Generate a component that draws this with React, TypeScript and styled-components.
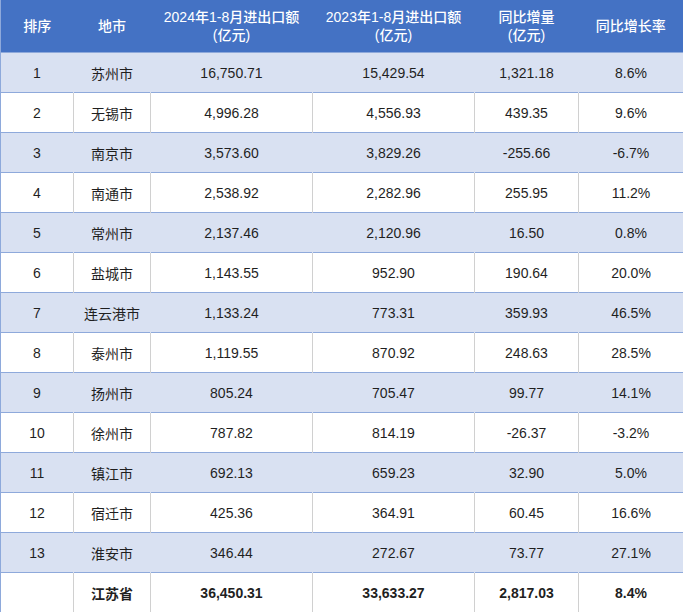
import React from "react";
import styled, { createGlobalStyle } from "styled-components";

const Global = createGlobalStyle`
  html, body { margin: 0; padding: 0; background: #fff; }
  body { font-family: "Liberation Sans", "Noto Sans CJK SC", sans-serif; }
`;

const Table = styled.table`
  width: 683px;
  border-collapse: collapse;
  table-layout: fixed;
  font-size: 14px;
  color: #1f1f1f;
  border-left: 1px solid #8ea9db;
  border-right: 1px solid #8ea9db;
  border-bottom: 1px solid #8ea9db;
`;

const Th = styled.th`
  background: #4472c4;
  color: #fff;
  font-weight: 500;
  height: 52px;
  padding: 0;
  line-height: 18px;
  text-align: center;
  font-size: 14px;
`;

const Td = styled.td<{ $band: boolean; $bold?: boolean }>`
  height: 39px;
  padding: 0;
  text-align: center;
  background: ${(p) => (p.$band ? "#d9e1f2" : "#fff")};
  border-top: 1px solid #8ea9db;
  border-left: 1px solid ${(p) => (p.$band ? "#d9e1f2" : "#d0d0d0")};
  font-weight: ${(p) => (p.$bold ? 700 : 400)};
  &:first-child { border-left: none; }
`;

const rows = [
  ["1", "苏州市", "16,750.71", "15,429.54", "1,321.18", "8.6%"],
  ["2", "无锡市", "4,996.28", "4,556.93", "439.35", "9.6%"],
  ["3", "南京市", "3,573.60", "3,829.26", "-255.66", "-6.7%"],
  ["4", "南通市", "2,538.92", "2,282.96", "255.95", "11.2%"],
  ["5", "常州市", "2,137.46", "2,120.96", "16.50", "0.8%"],
  ["6", "盐城市", "1,143.55", "952.90", "190.64", "20.0%"],
  ["7", "连云港市", "1,133.24", "773.31", "359.93", "46.5%"],
  ["8", "泰州市", "1,119.55", "870.92", "248.63", "28.5%"],
  ["9", "扬州市", "805.24", "705.47", "99.77", "14.1%"],
  ["10", "徐州市", "787.82", "814.19", "-26.37", "-3.2%"],
  ["11", "镇江市", "692.13", "659.23", "32.90", "5.0%"],
  ["12", "宿迁市", "425.36", "364.91", "60.45", "16.6%"],
  ["13", "淮安市", "346.44", "272.67", "73.77", "27.1%"],
];

const widths = [73, 77, 162, 162, 104, 105];

export default function App() {
  return (
    <>
      <Global />
      <Table>
        <colgroup>
          {widths.map((w, i) => <col key={i} style={{ width: w }} />)}
        </colgroup>
        <thead>
          <tr>
            <Th>排序</Th>
            <Th>地市</Th>
            <Th>2024年1-8月进出口额<br />(亿元)</Th>
            <Th>2023年1-8月进出口额<br />(亿元)</Th>
            <Th>同比增量<br />(亿元)</Th>
            <Th>同比增长率</Th>
          </tr>
        </thead>
        <tbody>
          {rows.map((r, i) => (
            <tr key={i}>
              {r.map((c, j) => <Td key={j} $band={i % 2 === 0}>{c}</Td>)}
            </tr>
          ))}
          <tr>
            {["", "江苏省", "36,450.31", "33,633.27", "2,817.03", "8.4%"].map((c, j) => (
              <Td key={j} $band={false} $bold>{c}</Td>
            ))}
          </tr>
        </tbody>
      </Table>
    </>
  );
}
